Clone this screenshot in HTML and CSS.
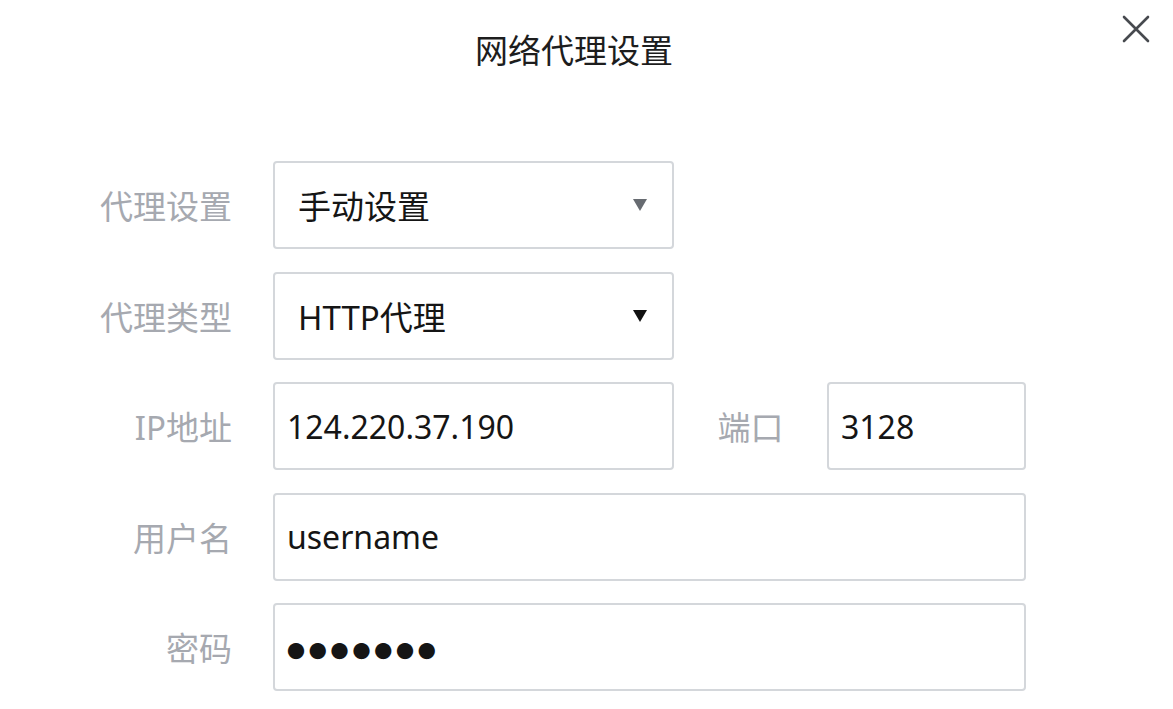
FILE: index.html
```html
<!DOCTYPE html>
<html lang="zh-CN">
<head>
    <meta charset="UTF-8">
    <meta name="viewport" content="width=device-width, initial-scale=1.0">
    <title>网络代理设置</title>
    <link rel="stylesheet" href="styles.css">
</head>
<body>
    <div class="dialog">
        <div class="dialog-header">
            <h1 class="dialog-title">网络代理设置</h1>
            <button class="close-btn" aria-label="关闭">
                <svg width="28" height="28" viewBox="0 0 28 28">
                    <path d="M2 2 L26 26 M26 2 L2 26" stroke="#474a4f" stroke-width="2.6" stroke-linecap="round" fill="none"/>
                </svg>
            </button>
        </div>

        <form class="proxy-form">
            <label class="field-label">代理设置</label>
            <div class="select-box">
                <span class="select-value">手动设置</span>
                <span class="caret caret-muted"></span>
            </div>

            <label class="field-label">代理类型</label>
            <div class="select-box">
                <span class="select-value">HTTP代理</span>
                <span class="caret"></span>
            </div>

            <label class="field-label">IP地址</label>
            <input class="text-input" type="text" value="124.220.37.190">
            <label class="field-label port-label">端口</label>
            <input class="text-input" type="text" value="3128">

            <label class="field-label">用户名</label>
            <input class="text-input wide" type="text" value="username">

            <label class="field-label">密码</label>
            <div class="text-input wide password-dots">●●●●●●●</div>
        </form>
    </div>
</body>
</html>
```

FILE: styles.css
```css
/* Proxy settings dialog */

body {
    margin: 0;
    background: #fff;
    font-family: 'Noto Sans', 'Noto Sans CJK SC', sans-serif;
    color: #1b1b1b;
}

.dialog {
    width: 1148px;
}

.dialog-header {
    position: relative;
    height: 100px;
    display: flex;
    align-items: center;
    justify-content: center;
}

.dialog-title {
    margin: 0;
    font-size: 33px;
    font-weight: 400;
    line-height: 1;
    color: #1d1d1d;
}

.close-btn {
    position: absolute;
    top: 15px;
    right: -2px;
    width: 28px;
    height: 28px;
    padding: 0;
    border: none;
    background: none;
    cursor: pointer;
}

.proxy-form {
    display: grid;
    grid-template-columns: 273px 401px 153px 199px;
    grid-auto-rows: 88px;
    row-gap: 22.5px;
    margin-top: 61px;
}

.field-label {
    grid-column: 1;
    align-self: center;
    padding-right: 41px;
    text-align: right;
    font-size: 33px;
    color: #a6a9b0;
}

.port-label {
    grid-column: 3;
    padding-right: 0;
    text-align: center;
}

.select-box,
.text-input {
    box-sizing: border-box;
    height: 88px;
    border: 2px solid #d4d7db;
    border-radius: 4px;
    background: #fff;
    font-family: inherit;
    font-size: 32px;
    color: #151515;
}

.select-box {
    grid-column: 2;
    display: flex;
    align-items: center;
    justify-content: space-between;
    padding: 0 25px 0 23px;
    font-size: 33px;
}

.caret {
    width: 0;
    height: 0;
    border-left: 7px solid transparent;
    border-right: 7px solid transparent;
    border-top: 12px solid #111;
}

.caret-muted {
    border-top-color: #676b71;
}

.text-input {
    width: 100%;
    padding: 0 12px;
    outline: none;
}

.wide {
    grid-column: 2 / 5;
}

.password-dots {
    display: flex;
    align-items: center;
    padding-top: 5px;
    font-size: 18px;
    letter-spacing: 3.8px;
}
```
